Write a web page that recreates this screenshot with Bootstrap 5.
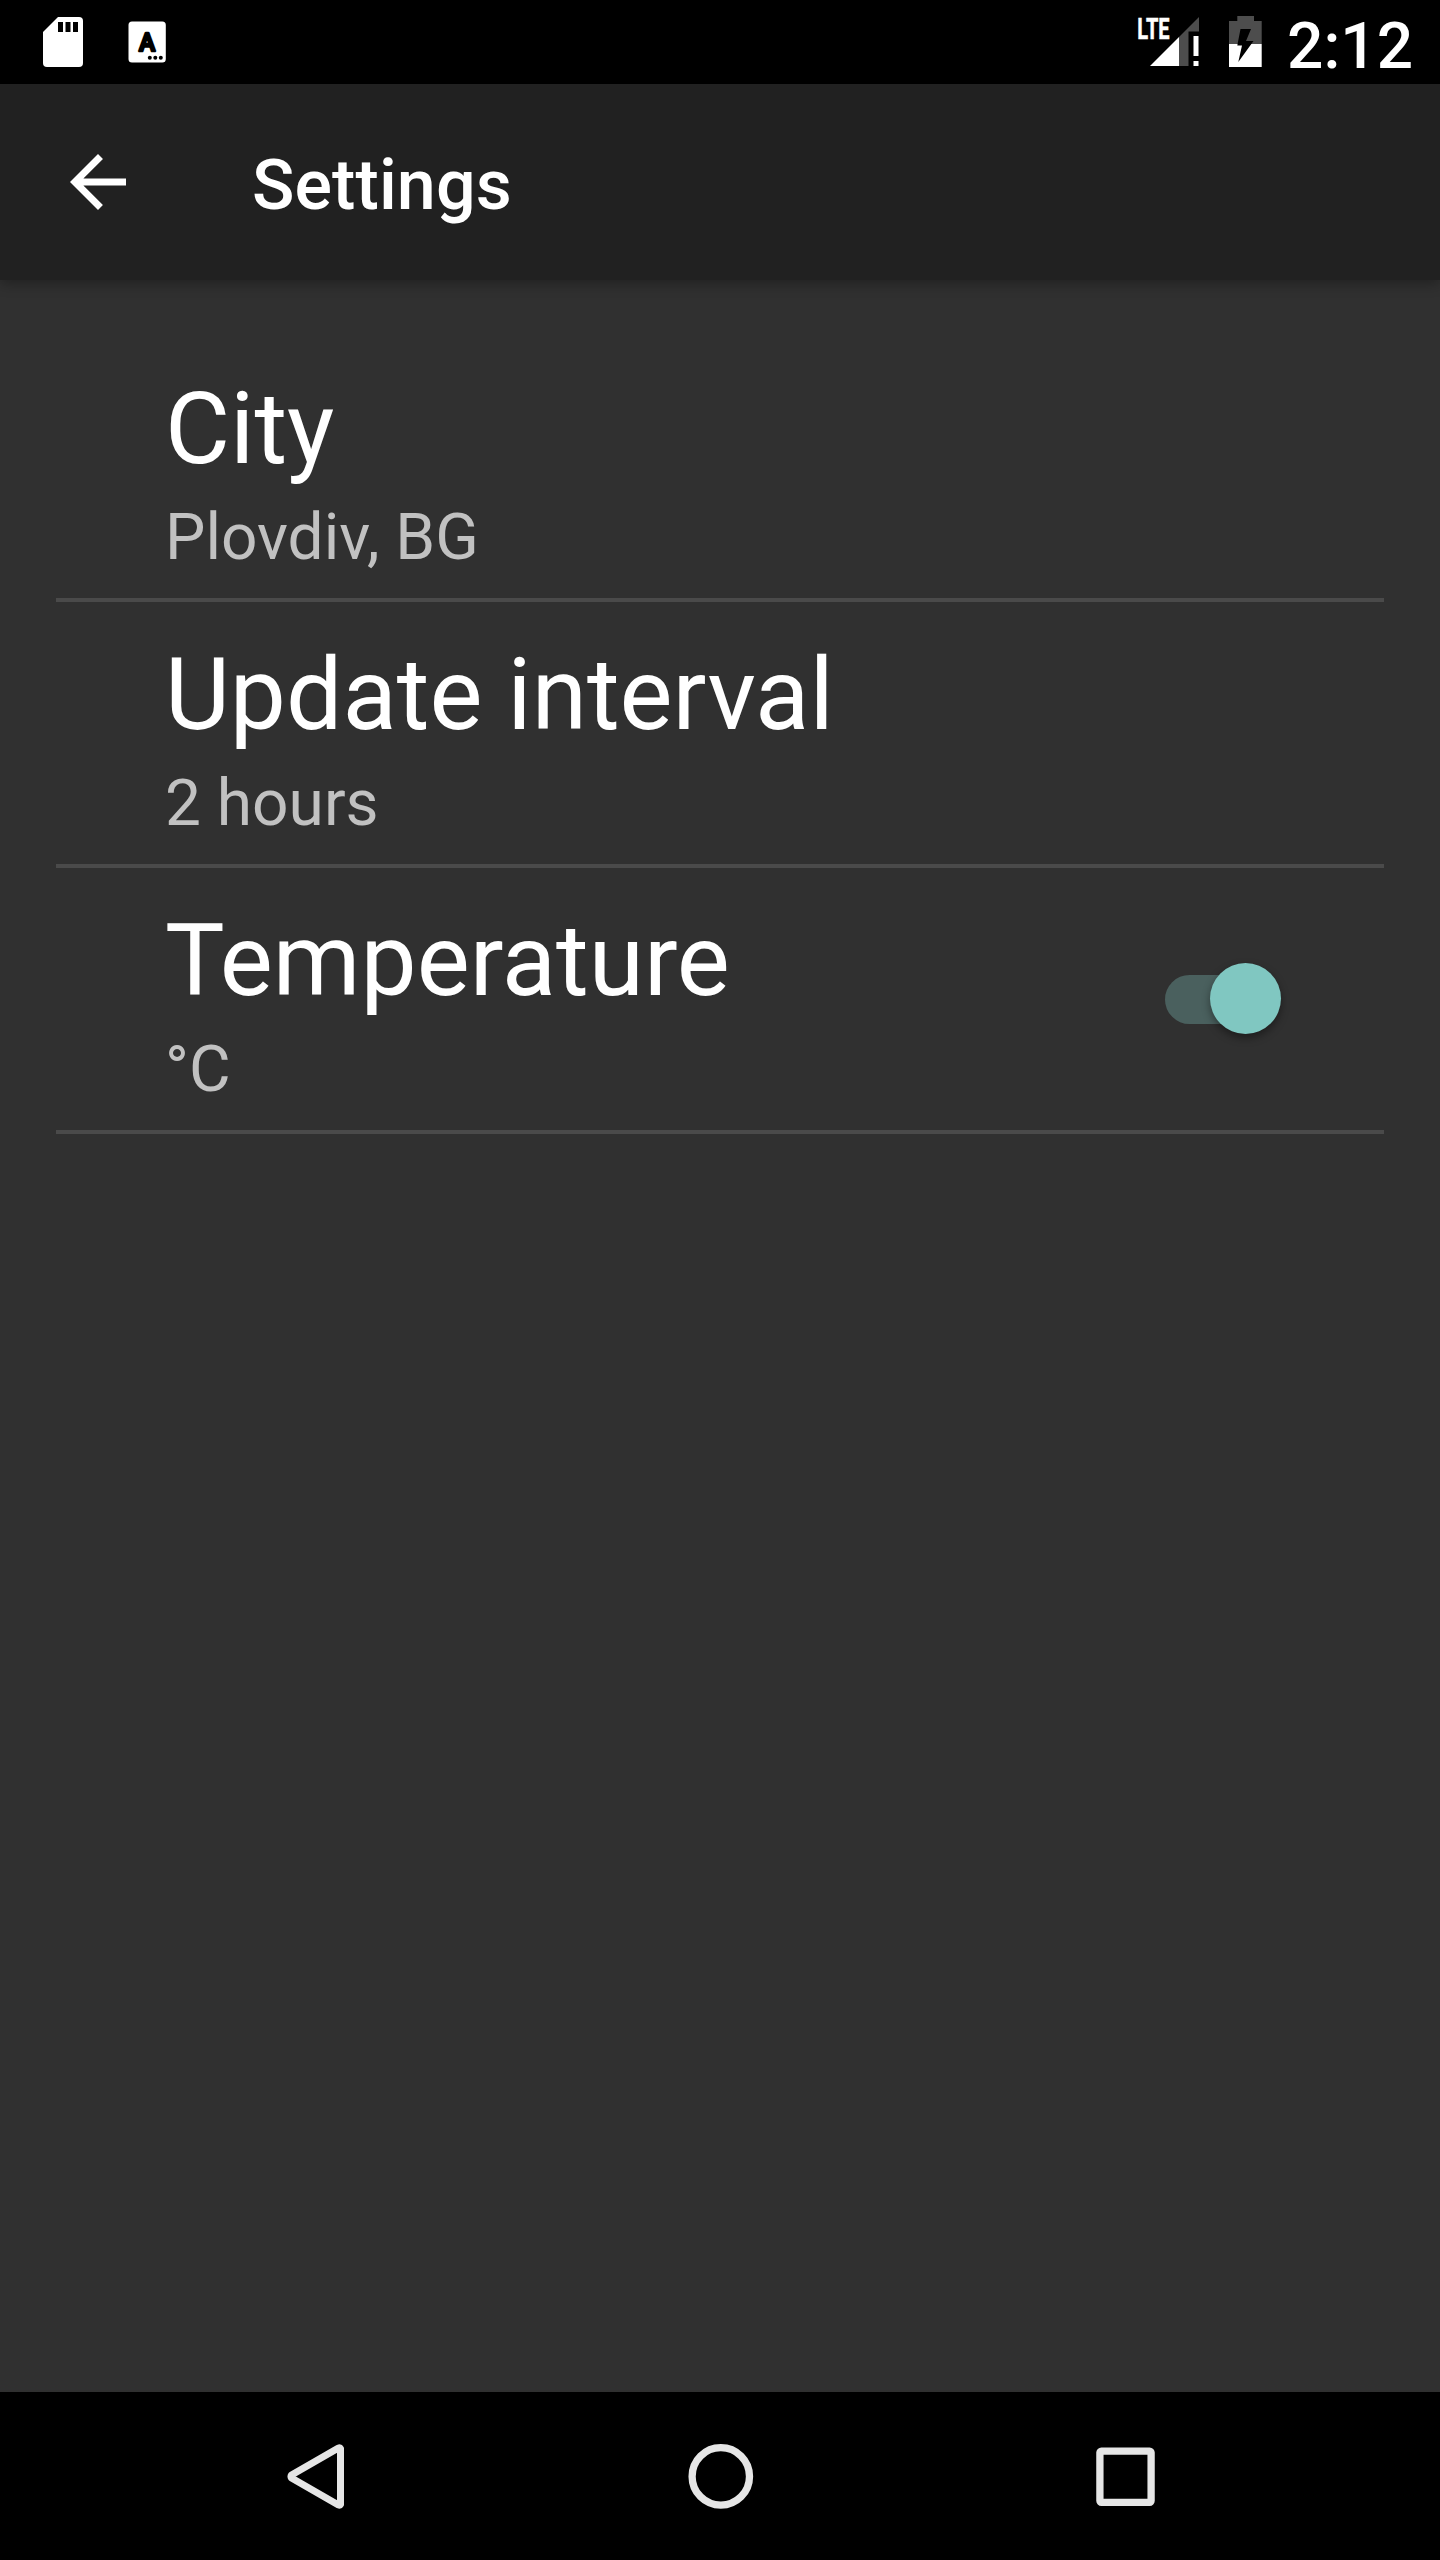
<!DOCTYPE html>
<html lang="en">
<head>
<meta charset="utf-8">
<meta name="viewport" content="width=device-width, initial-scale=1">
<title>Settings</title>
<link href="https://cdn.jsdelivr.net/npm/bootstrap@5.3.0/dist/css/bootstrap.min.css" rel="stylesheet">
<style>
  body { font-family: Roboto, "Liberation Sans", sans-serif; background: #303030; color: #fff; }
  svg { display: block; flex: none; }
  .screen { width: 1440px; height: 2560px; }
  .status-bar { height: 84px; background: #000; padding: 0 27px 0 42px; }
  .clock { font-size: 64px; font-weight: 500; line-height: 84px; padding-top: 5px; }
  .app-bar { height: 196px; background: #212121; padding-left: 56px; box-shadow: 0 4px 12px rgba(0,0,0,.3); }
  .app-title { font-size: 70px; font-weight: 500; line-height: 84px; margin: 6px 0 0 112px; letter-spacing: .1px; }
  .settings { padding: 56px; }
  .setting { height: 266px; border-bottom: 4px solid #4a4a4a; padding: 0 103px 0 109px; }
  .setting-name { font-size: 100px; line-height: 118px; padding-top: 34px; }
  .setting-value { font-size: 64px; line-height: 76px; color: #c1c1c1; padding-top: 12px; }
  .toggle { width: 116px; height: 71px; padding: 12px 0; margin-top: -1px; }
  .toggle-track { width: 100px; height: 49px; border-radius: 25px; background: #4a605e; }
  .toggle-thumb { width: 71px; height: 71px; right: 0; top: 0; background: #80c7c1; box-shadow: 0 4px 8px rgba(0,0,0,.4); }
  .nav-keys { height: 168px; background: #000; }
  .nav-key { width: 405px; }
</style>
</head>
<body>
<div class="screen d-flex flex-column overflow-hidden">
  <div class="status-bar d-flex justify-content-between">
    <div class="d-flex">
      <!-- SD card and keyboard notifications -->
      <svg width="126" height="84" viewBox="42 0 126 84">
        <path fill="#fff" d="M58 17H79Q83 17 83 21V63Q83 67 79 67H47Q43 67 43 63V32Z"/>
        <path d="M58 22h5v10h-5zM65.500 22h5v10h-5zM73 22h5v10h-5z"/>
        <rect x="128.500" y="21.500" width="37.300" height="41" rx="3.500" fill="#fff"/>
        <text transform="translate(147 50.800) scale(.92 1)" text-anchor="middle" font-size="26.500" font-weight="500" stroke="#000" stroke-width="2.600" stroke-linejoin="round">A</text>
        <circle cx="149.800" cy="57.800" r="2"/><circle cx="155.300" cy="57.800" r="2"/><circle cx="160.800" cy="57.800" r="2"/>
      </svg>
    </div>
    <div class="d-flex">
      <!-- Signal and charging battery -->
      <svg width="150" height="84" viewBox="1137 0 150 84">
        <text transform="translate(1137.300 39) scale(.64 1)" font-size="29.500" font-weight="700" fill="#fff" stroke="#fff" stroke-width=".5" textLength="50.500" lengthAdjust="spacingAndGlyphs">LTE</text>
        <path fill="#4d4d4d" d="M1179 37L1199 17V31.500H1188.500V66H1179Z"/>
        <path fill="#fff" d="M1150 66L1179 37V66ZM1193.500 36h5v20h-5zM1193.500 61h5v5h-5z"/>
        <path fill="#4d4d4d" d="M1237.300 16h16.700v5h7.700v23h-32.700V21h8.300z"/>
        <path fill="#fff" d="M1229 44h32.700v23H1229z"/>
        <path d="M1240.500 29H1251L1246 41H1253.500L1238.300 62L1242 45.500H1237.300Z"/>
      </svg>
      <div class="clock">2:12</div>
    </div>
  </div>
  <header class="app-bar d-flex align-items-center position-relative">
    <svg width="84" height="84" viewBox="0 0 24 24"><path fill="#fff" d="M20 11H7.830l5.590-5.590L12 4l-8 8 8 8 1.410-1.410L7.830 13H20z"/></svg>
    <h1 class="app-title">Settings</h1>
  </header>
  <main class="settings flex-grow-1">
    <div class="setting">
      <div class="setting-name">City</div>
      <div class="setting-value">Plovdiv, BG</div>
    </div>
    <div class="setting">
      <div class="setting-name">Update interval</div>
      <div class="setting-value">2 hours</div>
    </div>
    <div class="setting d-flex justify-content-between align-items-center">
      <div class="align-self-start">
        <div class="setting-name">Temperature</div>
        <div class="setting-value">°C</div>
      </div>
      <div class="toggle position-relative">
        <div class="toggle-track"></div>
        <div class="toggle-thumb position-absolute rounded-circle"></div>
      </div>
    </div>
  </main>
  <nav class="nav-keys d-flex justify-content-center">
    <svg class="nav-key" height="168" viewBox="113 2392 405 168"><path fill="none" stroke="#e6e6e6" stroke-width="7" stroke-linejoin="round" d="M340.500 2448.500V2504.500Q340 2505.500 338 2504.800L291.500 2478Q290.500 2476.500 291.500 2475L338 2448.200Q340 2447.500 340.500 2448.500Z"/></svg>
    <svg class="nav-key" height="168" viewBox="517.500 2392 405 168"><circle cx="720.300" cy="2476.400" r="28.700" fill="none" stroke="#e6e6e6" stroke-width="7.300"/></svg>
    <svg class="nav-key" height="168" viewBox="923 2392 405 168"><rect x="1099.900" y="2451.100" width="51.200" height="51.200" rx="1.500" fill="none" stroke="#e6e6e6" stroke-width="7.300"/></svg>
  </nav>
</div>
<script src="https://cdn.jsdelivr.net/npm/bootstrap@5.3.0/dist/js/bootstrap.bundle.min.js"></script>
</body>
</html>
